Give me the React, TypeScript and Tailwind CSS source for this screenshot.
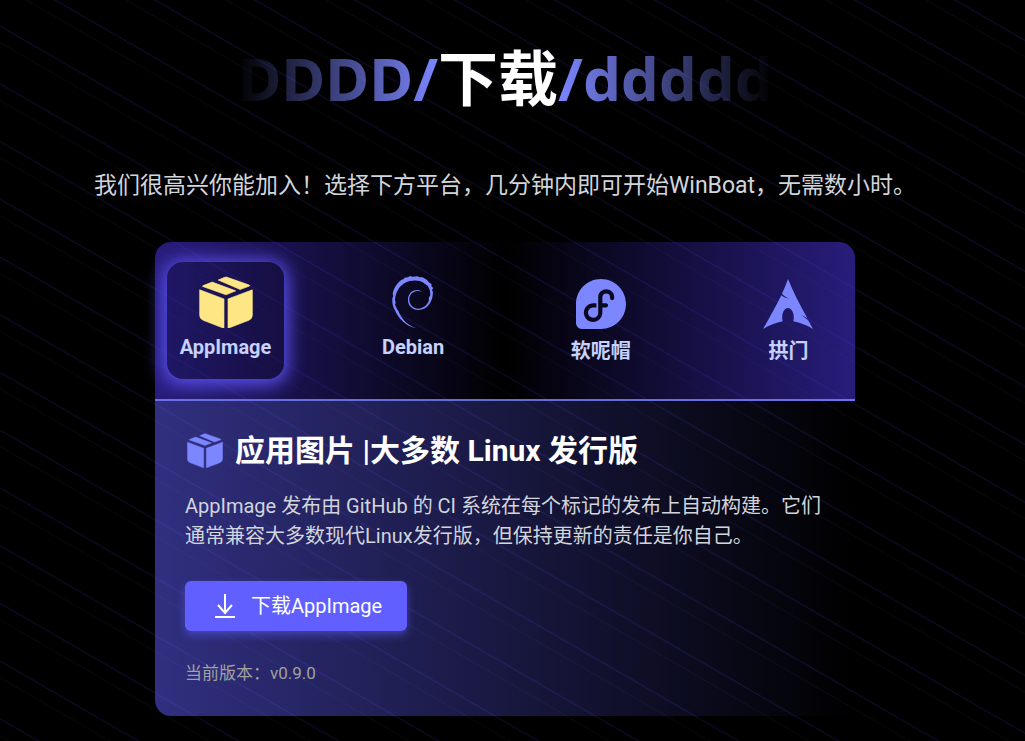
import { useState } from "react";
import type React from "react";
import { SiFedora } from "react-icons/si";

function BoxIcon({ className }: { className?: string }) {
  return (
    <svg
      viewBox="0 0 160 157"
      fill="currentColor"
      stroke="currentColor"
      strokeWidth="2"
      strokeLinejoin="round"
      className={className}
    >
      <path d="M57 12 76 4Q80 2 84 4L149 27Q152 29 149 30L122 40Z" />
      <path d="M11 29 39 18 109 44 82 55Q80 56 78 55L11 31Q9 30 11 29Z" />
      <path d="M2 41 74 68V155L12 131Q2 126 2 116Z" />
      <path d="M158 41 86 68V155L148 131Q158 126 158 116Z" />
    </svg>
  );
}

function DebianIcon({ className }: { className?: string }) {
  return (
    <svg viewBox="0 0 124 156" fill="currentColor" className={className}>
      <path d="M72 156C44 152 21 131 9 103C4 96 0 84 1 66L4 60L2 54C5 36 15 21 29 11L34 10L38 5L48 4L54 0L62 2L76 1L84 4L92 4L104 11L110 18L119 25L118 31L124 36L120 42L123 49C122 60 121 68 117 76C109 93 95 102 79 102C61 102 48 89 48 72C48 54 59 42 76 42C81 42 86 44 90 48C84 45 77 44 71 46C59 49 52 59 52 71C53 87 64 98 79 98C95 97 107 86 111 72L110 67L115 57L114 45C113 38 109 34 107 29L98 23C90 16 77 12 62 14C50 14 41 18 34 24C18 35 11 52 9 72L11 80L9 86L16 101L19 104C27 125 44 147 72 156Z" />
    </svg>
  );
}

function ArchIcon({ className }: { className?: string }) {
  return (
    <svg viewBox="0 0 150 150" fill="currentColor" className={className}>
      <path d="M75 0C70 15 64 29 57 44C62 50 70 55 79 59C70 58 61 54 55 49C38 83 20 116 0 150C20 139 39 131 59 127C54 108 62 87 75 87C88 87 96 108 91 127C112 131 131 139 150 150L137 126C130 119 122 113 113 109C121 111 128 114 134 119C111 78 90 38 75 0Z" />
    </svg>
  );
}

function DownloadIcon() {
  return (
    <svg
      viewBox="0 0 30 30"
      fill="none"
      stroke="currentColor"
      strokeWidth="2"
      className="size-[30px]"
    >
      <path d="M15 3V22M8 14L15 22L22 14M5 26H25" />
    </svg>
  );
}

const platforms: {
  label: string;
  icon: React.ReactNode;
  iconBox: string;
}[] = [
  {
    label: "AppImage",
    icon: <BoxIcon className="w-[54px]" />,
    iconBox: "h-[60px]",
  },
  {
    label: "Debian",
    icon: <DebianIcon className="h-[52px]" />,
    iconBox: "h-[60px]",
  },
  {
    label: "软呢帽",
    icon: <SiFedora className="size-[50px]" />,
    iconBox: "h-[64px]",
  },
  {
    label: "拱门",
    icon: <ArchIcon className="size-[50px]" />,
    iconBox: "h-[64px]",
  },
];

export default function App() {
  const [active, setActive] = useState(0);

  return (
    <div className="relative isolate min-h-screen overflow-hidden bg-black pr-[15px] pb-6 font-[Roboto,'Noto_Sans_CJK_SC',sans-serif] text-white">
      {/* Diagonal background lines */}
      <svg className="absolute inset-0 -z-10 size-full" aria-hidden="true">
        <defs>
          <pattern
            id="lines"
            width="100"
            height="57.735"
            patternUnits="userSpaceOnUse"
            patternTransform="translate(0 26)"
          >
            <path
              d="M-10 -5.77L110 63.51"
              stroke="#110e30"
              strokeWidth="1"
            />
            <path
              d="M-10 10.73L110 80.01M-10 -47L110 22.27"
              stroke="#0d0c12"
              strokeWidth="0.7"
            />
          </pattern>
        </defs>
        <rect width="100%" height="100%" fill="url(#lines)" />
      </svg>

      <main className="flex flex-col items-center px-4 pt-12">
        <h1 className="flex font-['Noto_Sans','Noto_Sans_CJK_SC',sans-serif] text-[60px] leading-[60px] font-bold">
          <span className="bg-linear-to-r from-transparent to-indigo-400 bg-clip-text text-transparent">
            DDDD/
          </span>
          <span>下载</span>
          <span className="bg-linear-to-r from-indigo-400 to-transparent bg-clip-text text-transparent">
            /ddddd
          </span>
        </h1>

        <p className="mt-[62px] text-center text-[23px] leading-[32px] text-gray-300">
          我们很高兴你能加入！选择下方平台，几分钟内即可开始WinBoat，无需数小时。
        </p>

        <section className="mt-10 w-full max-w-[700px]">
          <div className="flex justify-between rounded-t-2xl border-b-2 border-indigo-400/80 bg-linear-to-r from-indigo-600/50 via-transparent to-indigo-600/50 py-5 pr-2 pl-3">
            {platforms.map((platform, index) => (
              <button
                key={platform.label}
                type="button"
                onClick={() => setActive(index)}
                className={`flex h-[117px] w-[117px] flex-col items-center rounded-2xl pt-[10px] ${
                  active === index
                    ? "bg-black/15 text-amber-200 shadow-[0_2px_18px_4px_#5a50f0]"
                    : "text-indigo-400"
                }`}
              >
                <span
                  className={`flex items-center justify-center ${platform.iconBox}`}
                >
                  {platform.icon}
                </span>
                <span className="text-[20px] leading-[30px] font-bold text-indigo-200">
                  {platform.label}
                </span>
              </button>
            ))}
          </div>

          <div className="rounded-b-2xl bg-linear-to-r from-indigo-500/50 to-transparent p-[30px]">
            <div className="flex items-center gap-3">
              <BoxIcon className="ml-[2px] w-9 text-indigo-400" />
              <h2 className="text-[30px] leading-[40px] font-bold">
                应用图片 |大多数 Linux 发行版
              </h2>
            </div>
            <p className="mt-5 text-[20px] leading-[30px] text-gray-300">
              AppImage 发布由 GitHub 的 CI
              系统在每个标记的发布上自动构建。它们通常兼容大多数现代Linux发行版，但保持更新的责任是你自己。
            </p>
            <button
              type="button"
              className="mt-[30px] flex h-[50px] items-center gap-[11px] rounded-md bg-indigo-500 px-[25px] text-[20px] shadow-[0_4px_8px_#615fff80]"
            >
              <DownloadIcon />
              下载AppImage
            </button>
            <p className="mt-[30px] text-[17px] leading-[25px] text-neutral-400">
              当前版本：v0.9.0
            </p>
          </div>
        </section>
      </main>
    </div>
  );
}
